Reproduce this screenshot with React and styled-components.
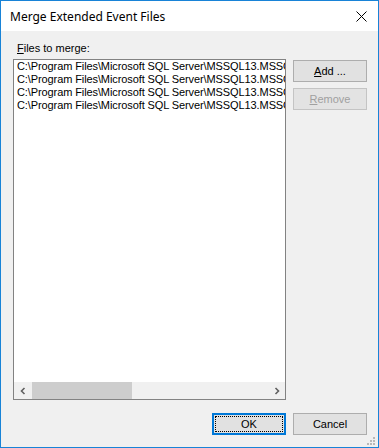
import { createGlobalStyle } from "styled-components";
import styled from "styled-components";

const GlobalStyle = createGlobalStyle`
  html, body {
    margin: 0;
    padding: 0;
    background: #ffffff;
  }
  * {
    box-sizing: border-box;
  }
`;

const Window = styled.div`
  width: 379px;
  height: 448px;
  border: 1px solid #1883d7;
  background: #f0f0f0;
  display: flex;
  flex-direction: column;
  position: relative;
  font-family: "Liberation Sans", Arial, sans-serif;
  font-size: 11px;
  color: #000;
`;

const TitleBar = styled.div`
  height: 30px;
  background: #ffffff;
  display: flex;
  align-items: center;
  justify-content: space-between;
  padding-left: 9px;
`;

const Title = styled.div`
  font-family: "Noto Sans", "Open Sans", sans-serif;
  font-size: 12px;
  line-height: 16px;
  padding-top: 1px;
`;

const CloseBox = styled.div`
  width: 34px;
  height: 30px;
  display: flex;
  align-items: center;
  justify-content: center;
`;

const Body = styled.div`
  flex: 1;
  display: flex;
  flex-direction: column;
  padding: 11px 11px 12px 12px;
  min-height: 0;
`;

const Label = styled.div`
  line-height: 13px;
  padding-left: 4px;
  margin-bottom: 4px;
`;

const MainRow = styled.div`
  flex: 1;
  display: flex;
  gap: 7px;
  min-height: 0;
`;

const ListBox = styled.div`
  width: 273px;
  flex-shrink: 0;
  border: 1px solid #828282;
  background: #ffffff;
  display: flex;
  flex-direction: column;
  overflow: hidden;
`;

const Items = styled.div`
  flex: 1;
  overflow: hidden;
  padding: 0 0 0 3px;
`;

const Item = styled.div`
  white-space: nowrap;
  overflow: hidden;
  line-height: 13px;
  letter-spacing: -0.1px;
`;

const HScroll = styled.div`
  height: 17px;
  display: flex;
  background: #f0f0f0;
`;

const ArrowBox = styled.div`
  width: 17px;
  height: 17px;
  display: flex;
  align-items: center;
  justify-content: center;
`;

const Track = styled.div`
  flex: 1;
  display: flex;
  align-items: stretch;
`;

const Thumb = styled.div`
  width: 100px;
  margin: 0 0 0 1px;
  background: #cdcdcd;
`;

const SideColumn = styled.div`
  display: flex;
  flex-direction: column;
  gap: 6px;
  padding-top: 1px;
`;

const Button = styled.div`
  width: 74px;
  height: 22px;
  display: flex;
  align-items: center;
  justify-content: center;
  background: ${(p) => (p.$disabled ? "#e3e3e3" : "#e1e1e1")};
  border: 1px solid ${(p) => (p.$disabled ? "#c4c4c4" : "#adadad")};
  color: ${(p) => (p.$disabled ? "#a0a0a0" : "#000")};
  position: relative;
  line-height: 13px;

  ${(p) =>
    p.$default &&
    `
    border: 2px solid #0078d7;
    &::after {
      content: "";
      position: absolute;
      inset: 1px;
      border: 1px dotted #000;
    }
  `}
`;

const Footer = styled.div`
  display: flex;
  justify-content: flex-end;
  gap: 7px;
  margin-top: 13px;
`;

const Grip = styled.svg`
  position: absolute;
  right: 3px;
  bottom: 2px;
`;

const files = [
  "C:\\Program Files\\Microsoft SQL Server\\MSSQL13.MSSQLSERVER\\MSSQL\\Log\\system_health_0_131287412458760000.xel",
  "C:\\Program Files\\Microsoft SQL Server\\MSSQL13.MSSQLSERVER\\MSSQL\\Log\\system_health_0_131290155472450000.xel",
  "C:\\Program Files\\Microsoft SQL Server\\MSSQL13.MSSQLSERVER\\MSSQL\\Log\\system_health_0_131292904781230000.xel",
  "C:\\Program Files\\Microsoft SQL Server\\MSSQL13.MSSQLSERVER\\MSSQL\\Log\\system_health_0_131295643318890000.xel",
];

const Chevron = ({ dir }) => (
  <svg width="8" height="8" viewBox="0 0 8 8">
    <path
      d={dir === "left" ? "M5.5 1 L2.5 4 L5.5 7" : "M2.5 1 L5.5 4 L2.5 7"}
      fill="none"
      stroke="#606060"
      strokeWidth="1.6"
    />
  </svg>
);

export default function App() {
  return (
    <>
      <GlobalStyle />
      <Window>
        <TitleBar>
          <Title>Merge Extended Event Files</Title>
          <CloseBox>
            <svg width="11" height="11" viewBox="0 0 11 11">
              <path d="M0.5 0.5 L10.5 10.5 M10.5 0.5 L0.5 10.5" stroke="#000" strokeWidth="1" />
            </svg>
          </CloseBox>
        </TitleBar>
        <Body>
          <Label>
            <u>F</u>iles to merge:
          </Label>
          <MainRow>
            <ListBox>
              <Items>
                {files.map((f) => (
                  <Item key={f}>{f}</Item>
                ))}
              </Items>
              <HScroll>
                <ArrowBox>
                  <Chevron dir="left" />
                </ArrowBox>
                <Track>
                  <Thumb />
                </Track>
                <ArrowBox>
                  <Chevron dir="right" />
                </ArrowBox>
              </HScroll>
            </ListBox>
            <SideColumn>
              <Button>
                <span>
                  <u>A</u>dd ...
                </span>
              </Button>
              <Button $disabled>
                <span>
                  <u>R</u>emove
                </span>
              </Button>
            </SideColumn>
          </MainRow>
          <Footer>
            <Button $default>OK</Button>
            <Button>Cancel</Button>
          </Footer>
        </Body>
        <Grip width="8" height="8" viewBox="0 0 8 8">
          <rect x="6" y="0" width="2" height="2" fill="#b8b8b8" />
          <rect x="3" y="3" width="2" height="2" fill="#b8b8b8" />
          <rect x="6" y="3" width="2" height="2" fill="#b8b8b8" />
          <rect x="0" y="6" width="2" height="2" fill="#b8b8b8" />
          <rect x="3" y="6" width="2" height="2" fill="#b8b8b8" />
          <rect x="6" y="6" width="2" height="2" fill="#b8b8b8" />
        </Grip>
      </Window>
    </>
  );
}
